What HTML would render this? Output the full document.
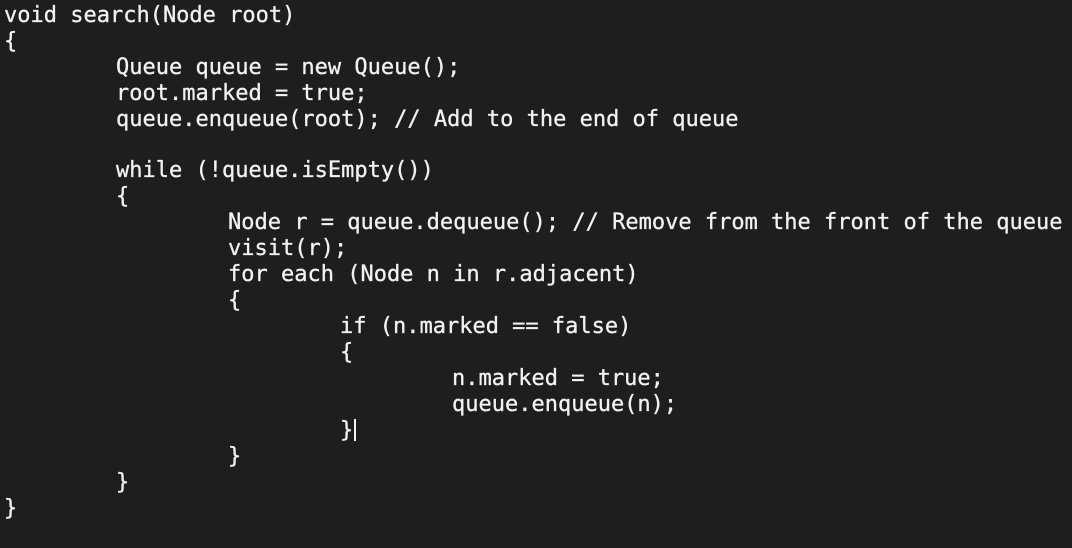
<!DOCTYPE html>
<html><head><style>
html,body{margin:0;padding:0;background:#1e1e1e;width:1072px;height:548px;overflow:hidden}
.l{position:absolute;left:4px;height:26px;font-family:"DejaVu Sans Mono","Liberation Mono",monospace;font-size:22px;line-height:26px;color:#f2f2f2;white-space:pre;-webkit-text-stroke:0.3px #f2f2f2}
.c{display:inline-block;width:2px;height:22px;background:#f2f2f2;vertical-align:-4px;margin-left:1px}
</style></head><body>
<div class="l" style="top:3px">void search(Node root)</div>
<div class="l" style="top:29px">{</div>
<div class="l" style="top:55px;left:116px">Queue queue = new Queue();</div>
<div class="l" style="top:81px;left:116px">root.marked = true;</div>
<div class="l" style="top:107px;left:116px">queue.enqueue(root); // Add to the end of queue</div>
<div class="l" style="top:158px;left:116px">while (!queue.isEmpty())</div>
<div class="l" style="top:184px;left:116px">{</div>
<div class="l" style="top:210px;left:228px">Node r = queue.dequeue(); // Remove from the front of the queue</div>
<div class="l" style="top:236px;left:228px">visit(r);</div>
<div class="l" style="top:262px;left:228px">for each (Node n in r.adjacent)</div>
<div class="l" style="top:288px;left:228px">{</div>
<div class="l" style="top:314px;left:340px">if (n.marked == false)</div>
<div class="l" style="top:340px;left:340px">{</div>
<div class="l" style="top:366px;left:452px">n.marked = true;</div>
<div class="l" style="top:392px;left:452px">queue.enqueue(n);</div>
<div class="l" style="top:418px;left:340px">}<span class="c"></span></div>
<div class="l" style="top:444px;left:228px">}</div>
<div class="l" style="top:470px;left:116px">}</div>
<div class="l" style="top:496px">}</div>
</body></html>
